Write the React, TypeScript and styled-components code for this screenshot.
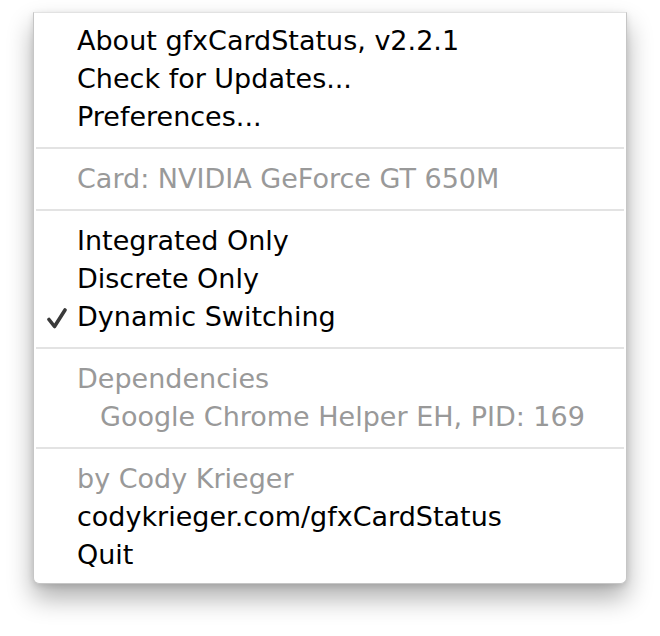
import React from 'react';
import styled, { createGlobalStyle } from 'styled-components';

const GlobalStyle = createGlobalStyle`
  html, body {
    margin: 0;
    padding: 0;
    background: #ffffff;
  }
  body {
    font-family: "DejaVu Sans", "Liberation Sans", sans-serif;
  }
`;

type Entry =
  | { kind: 'item'; label: string; disabled?: boolean; checked?: boolean; indent?: boolean }
  | { kind: 'sep' };

const entries: Entry[] = [
  { kind: 'item', label: 'About gfxCardStatus, v2.2.1' },
  { kind: 'item', label: 'Check for Updates...' },
  { kind: 'item', label: 'Preferences...' },
  { kind: 'sep' },
  { kind: 'item', label: 'Card: NVIDIA GeForce GT 650M', disabled: true },
  { kind: 'sep' },
  { kind: 'item', label: 'Integrated Only' },
  { kind: 'item', label: 'Discrete Only' },
  { kind: 'item', label: 'Dynamic Switching', checked: true },
  { kind: 'sep' },
  { kind: 'item', label: 'Dependencies', disabled: true },
  { kind: 'item', label: 'Google Chrome Helper EH, PID: 169', disabled: true, indent: true },
  { kind: 'sep' },
  { kind: 'item', label: 'by Cody Krieger', disabled: true },
  { kind: 'item', label: 'codykrieger.com/gfxCardStatus' },
  { kind: 'item', label: 'Quit' },
];

const Check = () => (
  <svg width="20" height="22" viewBox="0 0 20 22">
    <path d="M2 12.5 L7.5 19.5 L18 3" fill="none" stroke="#3a3a3a" strokeWidth="3.6" strokeLinecap="round" strokeLinejoin="round" />
  </svg>
);

export default function App() {
  return (
    <Page>
      <GlobalStyle />
      <Menu>
        {entries.map((e, i) =>
          e.kind === 'sep' ? (
            <Separator key={i} />
          ) : (
            <Item key={i} $disabled={e.disabled} $indent={e.indent}>
              <Mark>{e.checked && <Check />}</Mark>
              <Label>{e.label}</Label>
            </Item>
          )
        )}
      </Menu>
    </Page>
  );
}

const Page = styled.div`
  padding: 12px 0 0 33px;
  width: 660px;
  height: 636px;
  box-sizing: border-box;
`;

const Menu = styled.div`
  width: 594px;
  box-sizing: border-box;
  background: #ffffff;
  border: 1px solid #c6c6c6;
  border-top-color: #e2e2e2;
  border-radius: 0 0 6px 6px;
  padding: 9px 0 9px;
  box-shadow: 0 14px 26px rgba(0, 0, 0, 0.32), 0 2px 6px rgba(0, 0, 0, 0.12);
`;

const Item = styled.div<{ $disabled?: boolean; $indent?: boolean }>`
  display: flex;
  align-items: center;
  height: 38px;
  padding-left: ${(p) => (p.$indent ? '36px' : '13px')};
  font-size: 27px;
  color: ${(p) => (p.$disabled ? '#999999' : '#000000')};
  white-space: nowrap;
`;

const Mark = styled.span`
  width: 30px;
  flex: none;
  display: flex;
  align-items: center;
  padding-top: 2px;
`;

const Label = styled.span`
  line-height: 38px;
`;

const Separator = styled.div`
  height: 2px;
  background: #e3e3e3;
  margin: 11px 2px;
`;
